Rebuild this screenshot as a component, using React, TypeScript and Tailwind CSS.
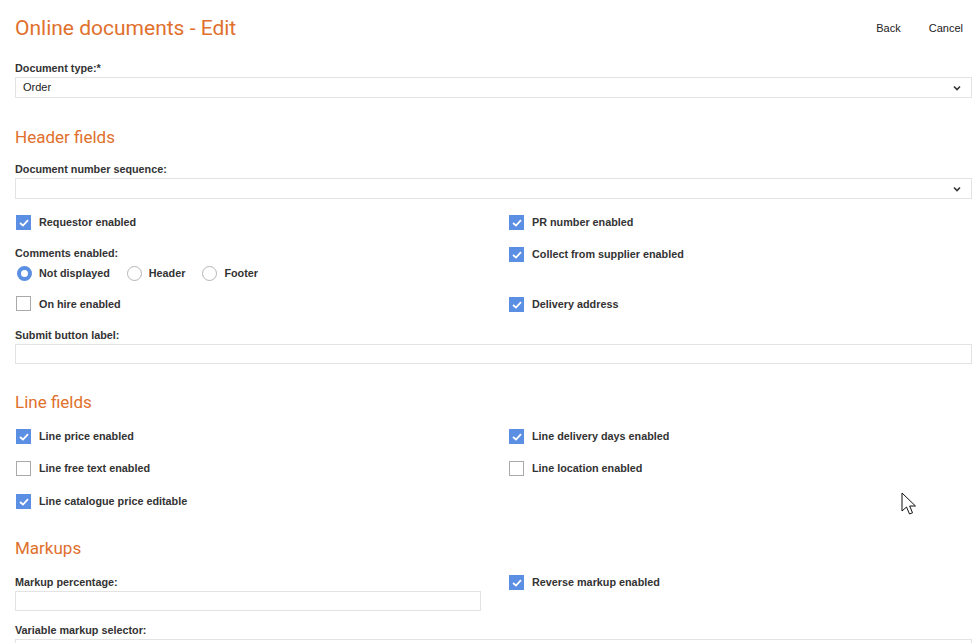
import { ReactNode } from "react";

const orange = "text-[#e0702c]";

function Check({ checked, label }: { checked?: boolean; label: string }) {
  return (
    <div className="flex items-center h-[15px]">
      {checked ? (
        <span className="w-[15px] h-[15px] bg-[#5b8fe3] flex items-center justify-center ml-px">
          <svg width="10" height="8" viewBox="0 0 10 8" fill="none">
            <path d="M1 4 L4 6.5 L9 1.2" stroke="#fff" strokeWidth="1.8" />
          </svg>
        </span>
      ) : (
        <span className="w-[15px] h-[15px] border border-[#a9a9a9] bg-white ml-px" />
      )}
      <span className="ml-[8px] text-[10.8px] font-bold text-[#333]">{label}</span>
    </div>
  );
}

function Radio({ checked, label }: { checked?: boolean; label: string }) {
  return (
    <div className="flex items-center mr-[15px]">
      {checked ? (
        <span className="w-[15px] h-[15px] rounded-full border-[4px] border-[#5b8fe3] bg-white ml-[2px]" />
      ) : (
        <span className="w-[15px] h-[15px] rounded-full border border-[#b5b5b5] bg-white ml-[2px]" />
      )}
      <span className="ml-[7px] text-[10.8px] font-bold text-[#333]">{label}</span>
    </div>
  );
}

function Label({ children }: { children: ReactNode }) {
  return <div className="text-[10.8px] font-bold text-[#333] leading-[13px] mb-[2px]">{children}</div>;
}

function Select({ value }: { value?: string }) {
  return (
    <div className="h-[21px] border border-[#e3e3e3] flex items-center justify-between px-[7px]">
      <span className="text-[11px] text-[#222]">{value}</span>
      <svg width="8" height="6" viewBox="0 0 8 6" className="mr-[3px]">
        <path d="M1 1.5 L4 4.5 L7 1.5" stroke="#333" strokeWidth="1.6" fill="none" />
      </svg>
    </div>
  );
}

function Input({ className = "" }: { className?: string }) {
  return <div className={`h-[20px] border border-[#e3e3e3] ${className}`} />;
}

function Heading({ children, className = "" }: { children: ReactNode; className?: string }) {
  return (
    <h2 className={`${orange} text-[17px] leading-[20px] ${className}`} style={{ fontFamily: "Roboto, sans-serif" }}>
      {children}
    </h2>
  );
}

export default function App() {
  return (
    <div className="w-[977px] h-[643px] overflow-hidden bg-white relative" style={{ fontFamily: '"Liberation Sans", Arial, sans-serif' }}>
      <div className="pl-[15px] pr-[5px]">
        <div className="flex items-center justify-between h-[56px] pt-[1px]">
          <h1 className={`${orange} text-[21px]`} style={{ fontFamily: "Roboto, sans-serif" }}>
            Online documents - Edit
          </h1>
          <div className="flex gap-[28px] text-[11px] text-[#222] mr-[9px]">
            <span>Back</span>
            <span>Cancel</span>
          </div>
        </div>

        <div className="pt-[6px]">
          <Label>Document type:*</Label>
          <Select value="Order" />
        </div>

        <Heading className="mt-[29px]">Header fields</Heading>

        <div className="mt-[16px]">
          <Label>Document number sequence:</Label>
          <Select />
        </div>

        <div className="grid grid-cols-[466px_1fr] gap-x-[27px] mt-[16px]">
          <div>
            <Check checked label="Requestor enabled" />
            <div className="mt-[17px]">
              <Label>Comments enabled:</Label>
              <div className="flex mt-[5px]">
                <Radio checked label="Not displayed" />
                <Radio label="Header" />
                <Radio label="Footer" />
              </div>
            </div>
            <div className="mt-[15px]">
              <Check label="On hire enabled" />
            </div>
          </div>
          <div>
            <Check checked label="PR number enabled" />
            <div className="mt-[17px]">
              <Check checked label="Collect from supplier enabled" />
            </div>
            <div className="mt-[35px]">
              <Check checked label="Delivery address" />
            </div>
          </div>
        </div>

        <div className="mt-[17px]">
          <Label>Submit button label:</Label>
          <Input />
        </div>

        <Heading className="mt-[28px]">Line fields</Heading>

        <div className="grid grid-cols-[466px_1fr] gap-x-[27px] gap-y-[17px] mt-[17px]">
          <Check checked label="Line price enabled" />
          <Check checked label="Line delivery days enabled" />
          <Check label="Line free text enabled" />
          <Check label="Line location enabled" />
          <div className="mt-[1px]">
            <Check checked label="Line catalogue price editable" />
          </div>
        </div>

        <Heading className="mt-[29px]">Markups</Heading>

        <div className="grid grid-cols-[466px_1fr] gap-x-[27px] mt-[18px]">
          <div>
            <Label>Markup percentage:</Label>
            <Input />
          </div>
          <div className="-mt-px">
            <Check checked label="Reverse markup enabled" />
          </div>
        </div>

        <div className="mt-[13px]">
          <Label>Variable markup selector:</Label>
          <Select />
        </div>
      </div>

      <svg className="absolute left-[901px] top-[492px]" width="20" height="28" viewBox="0 0 20 28">
        <path
          d="M1 1 L1 19 L5.5 15 L8.5 22 L11.5 20.8 L8.7 14 L14.5 14 Z"
          fill="#fff"
          stroke="#111"
          strokeWidth="1"
          strokeLinejoin="round"
        />
      </svg>
    </div>
  );
}
